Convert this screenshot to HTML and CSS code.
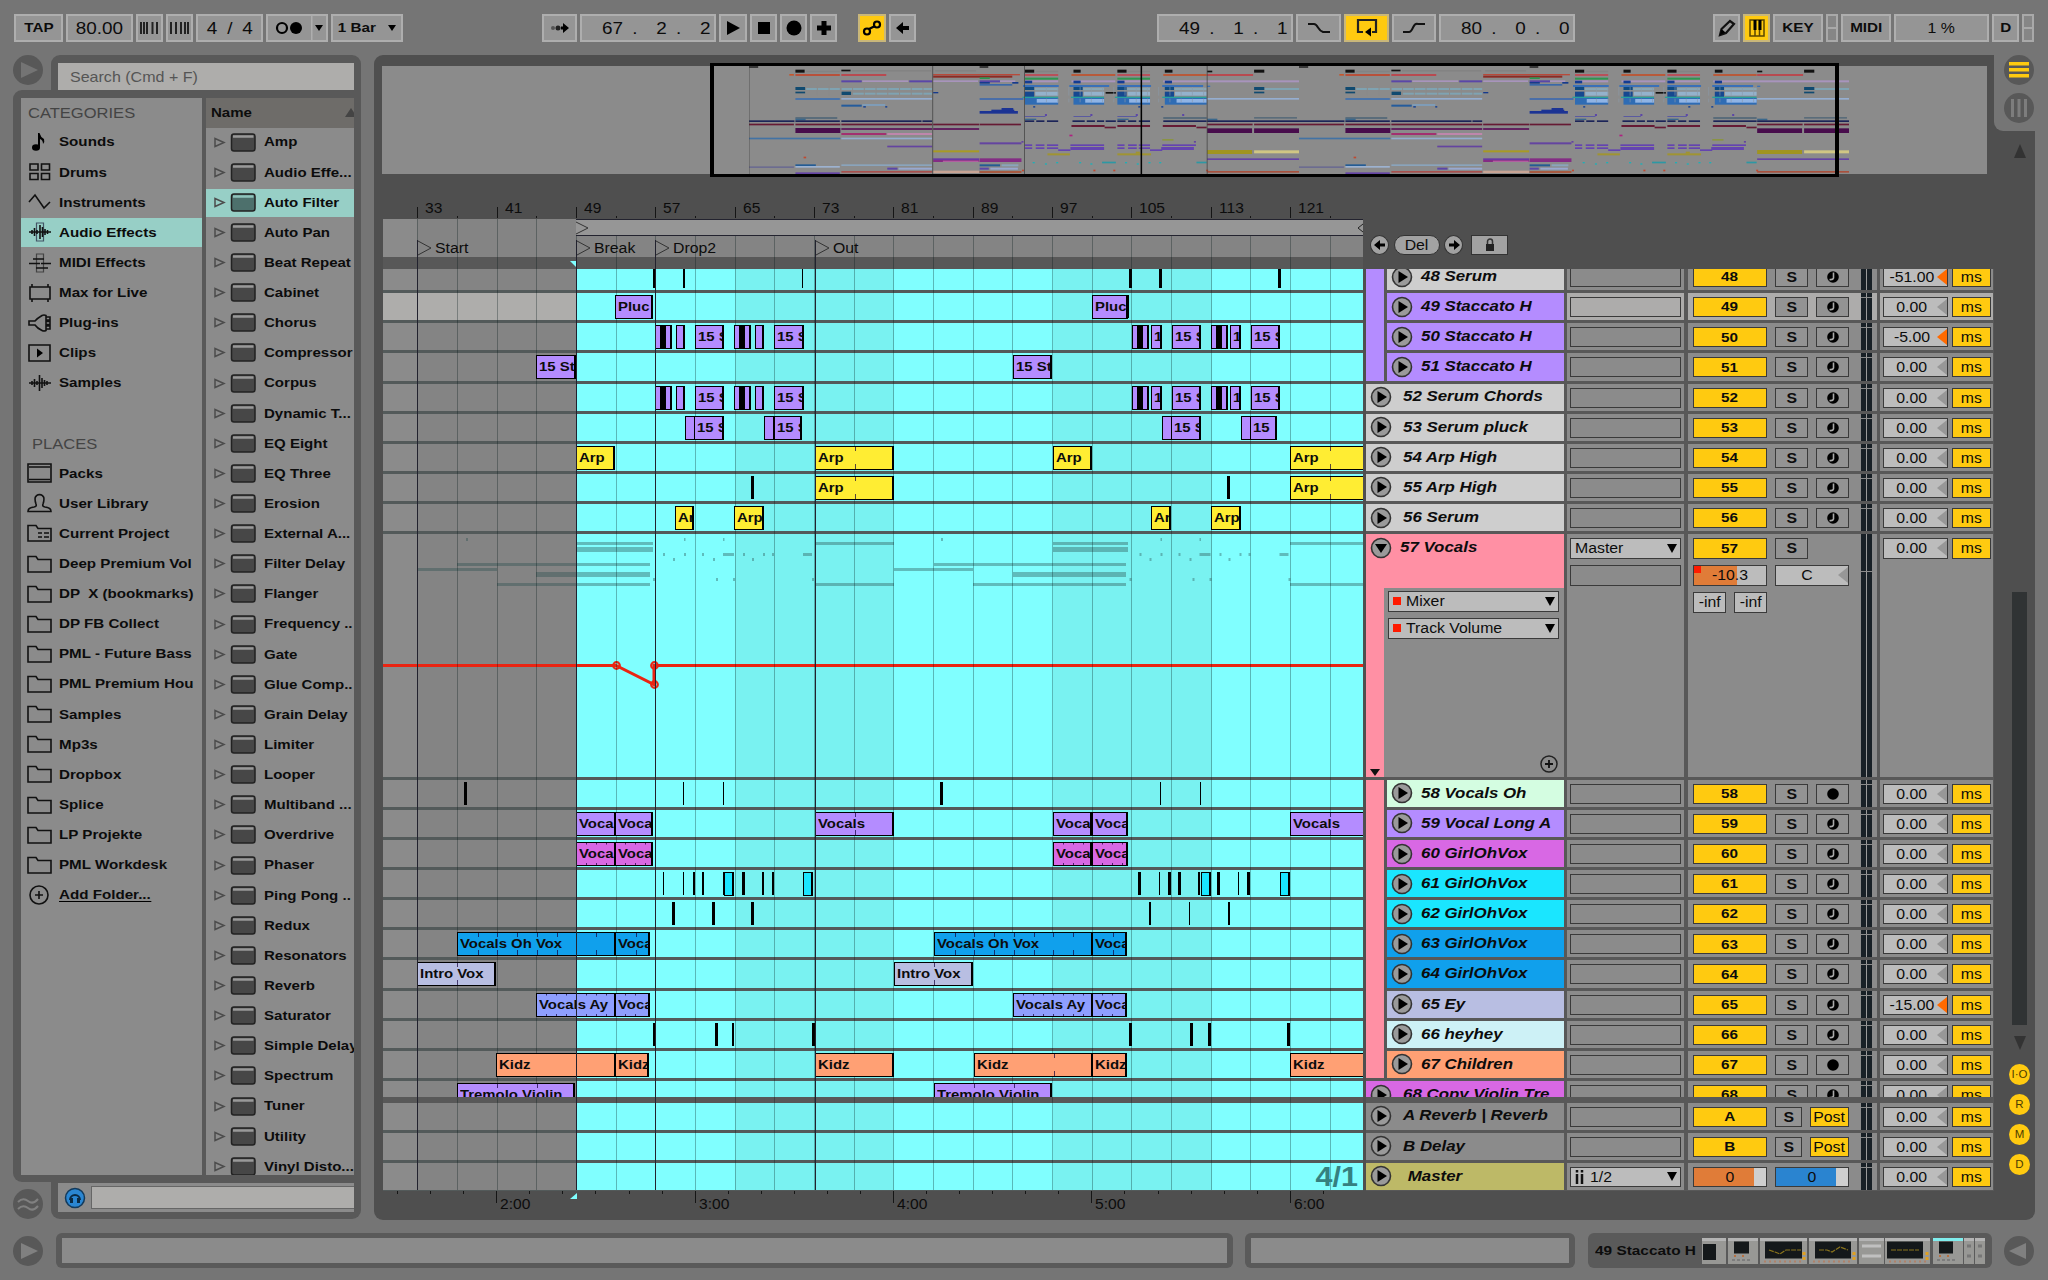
FILE: index.html
```html
<!DOCTYPE html>
<html lang="en">
<head>
    <meta charset="UTF-8">
    <meta name="viewport" content="width=device-width, initial-scale=1.0">
    <title>Arrangement</title>
    <link rel="stylesheet" href="styles.css">
</head>
<body>
    <header class="topbar">
        <div class="group">
            <div class="btn w49 bold"><span>TAP</span></div>
            <div class="btn w67 big"><span>80.00</span></div>
            <div class="btn w27"><svg width="21" height="14"><path d="M2 1v12M5 1v12M8 1v12M13.500 1v12M18 1v12" stroke="#222" stroke-width="2"/></svg></div>
            <div class="btn w27"><svg width="21" height="14"><path d="M2 1v12M7 1v12M12 1v12M16 1v12M19 1v12" stroke="#222" stroke-width="2"/></svg></div>
            <div class="btn w67 big"><span class="sig">4 / 4</span></div>
            <div class="btn w62 metro">
                <svg width="30" height="14"><ellipse cx="8" cy="7" rx="5" ry="5" fill="none" stroke="#000" stroke-width="2.200"/><circle cx="22" cy="7" r="6"/></svg>
                <i class="down"></i>
            </div>
            <div class="btn w72 bold"><span>1 Bar</span><i class="down"></i></div>
        </div>
        <div class="group transport">
            <div class="btn w35"><svg width="22" height="12"><circle cx="4" cy="6" r="2" fill="#555"/><circle cx="9" cy="6" r="2.500" fill="#222"/><path d="M12 4.500h2v-3.500l6 5-6 5v-3.500h-2z"/></svg></div>
            <div class="btn w136 big right"><span>67 .&nbsp; 2 .&nbsp; 2</span></div>
            <div class="btn w28"><svg width="16" height="16"><path d="M2 1l13 7-13 7z"/></svg></div>
            <div class="btn w27"><svg width="14" height="14"><path d="M1 1h12v12H1z"/></svg></div>
            <div class="btn w27"><svg width="16" height="16"><circle cx="8" cy="8" r="7.500"/></svg></div>
            <div class="btn w27"><svg width="16" height="16"><path d="M5.500 1h5v4.500H15v5h-4.500V15h-5v-4.500H1v-5h4.500z"/></svg></div>
            <div class="btn w28 on gap"><svg width="20" height="16" fill="none" stroke="#000" stroke-width="2.200"><circle cx="5" cy="11.500" r="3"/><circle cx="15" cy="4.500" r="3"/><path d="M7 9l6-3"/></svg></div>
            <div class="btn w27"><svg width="16" height="14"><path d="M1 7l7-6v4h6v4H8v4z"/></svg></div>
        </div>
        <div class="group loop">
            <div class="btn w136 big right"><span>49 .&nbsp; 1 .&nbsp; 1</span></div>
            <div class="btn w45"><svg width="24" height="12"><path d="M1 2h6q2 0 4 3.500T16 10h7" fill="none" stroke="#111" stroke-width="2"/></svg></div>
            <div class="btn w45 on"><svg width="22" height="20"><path d="M7 14H2V2h18v12h-4" fill="none" stroke="#222" stroke-width="2.200"/><path d="M9 14l6-4.500v9z"/></svg></div>
            <div class="btn w44"><svg width="24" height="12"><path d="M1 10h6q2 0 4-4.500T16 2h7" fill="none" stroke="#111" stroke-width="2"/></svg></div>
            <div class="btn w136 big right"><span>80 .&nbsp; 0 .&nbsp; 0</span></div>
        </div>
        <div class="group status">
            <div class="btn w27"><svg width="18" height="18"><path d="M2 16l1.500-6L12 2l4 3-8 9z" fill="none" stroke="#111" stroke-width="2.200"/><path d="M3.500 10l4 3.500L2 16z"/></svg></div>
            <div class="btn w27 on"><svg width="18" height="18"><path d="M2 1h14v16H2zM7 1v16M11.500 1v16" fill="none" stroke="#5a4600" stroke-width="1.500"/><path d="M5.500 1h3v10h-3zM10.500 1h3v10h-3z"/></svg></div>
            <div class="btn w50 bold"><span>KEY</span></div>
            <div class="lamps"><i></i><i></i></div>
            <div class="btn w50 bold"><span>MIDI</span></div>
            <div class="btn w95"><span>1 %</span></div>
            <div class="btn w27 bold"><span>D</span></div>
            <div class="lamps"><i></i><i></i></div>
        </div>
    </header>

    <div class="middle">
        <aside class="browser">
            <div class="browser-top">
                <div class="side"><div class="knob"><svg width="30" height="30"><path d="M8 7l17 8-17 8z" fill="#747474"/></svg></div></div>
                <div class="search-frame"><div class="search"><span>Search (Cmd + F)</span></div></div>
            </div>
            <div class="browser-main">
                <div class="sources">
                    <h3><span>CATEGORIES</span></h3>
                    <div id="categories"></div>
                    <h3 class="places"><span>PLACES</span></h3>
                    <div id="places"></div>
                </div>
                <div class="content">
                    <div class="content-head"><span>Name</span><i></i></div>
                    <div id="devices"></div>
                </div>
            </div>
            <div class="browser-bottom">
                <div class="side low"><div class="knob"><svg width="30" height="30" fill="none" stroke="#808080" stroke-width="2"><path d="M5 13q5-5 10-1t10-2M5 20q5-5 10-1t10-2"/></svg></div></div>
                <div class="preview-frame">
                    <div class="preview">
                        <svg width="22" height="22"><circle cx="11" cy="11" r="9.500" fill="#2a86d2" stroke="#123a5c" stroke-width="1.500"/><path d="M6 13a5 5 0 1 1 10 0" fill="none" stroke="#0a2a44" stroke-width="2"/><path d="M6 11h3v5H6zM13 11h3v5h-3z" fill="#0a2a44"/></svg>
                        <div class="preview-bar"></div>
                    </div>
                </div>
            </div>
        </aside>

        <main class="main">
            <div class="notch">
                <div class="knob"><svg width="30" height="30"><path d="M5 7h20v3.500H5zM5 13h20v3.500H5zM5 19h20v3.500H5z" fill="#ffca10"/></svg></div>
                <div class="knob"><svg width="30" height="30"><path d="M8.500 6v18M15 6v18M21.500 6v18" stroke="#7d7d7d" stroke-width="3"/></svg></div>
            </div>
            <div class="overview">
                <svg id="overview" width="1100" height="108" viewBox="0 0 2156 324" preserveAspectRatio="none"></svg>
                <div class="window"></div>
            </div>
            <div class="arrangement">
                <section class="timeline">
                    <div class="ruler" id="ruler"></div>
                    <div class="scrub">
                        <div class="brace"><svg width="14" height="14"><path d="M0 1l12 6-12 6" fill="none" stroke="#333"/></svg><svg width="6" height="10"><path d="M6 1L1 5l5 4" fill="none" stroke="#222"/></svg></div>
                    </div>
                    <div class="strip"></div>
                    <div class="lanes" id="lanes"></div>
                    <div class="divider"></div>
                    <div class="returns" id="returnLanes"></div>
                    <div class="times" id="times"></div>
                    <div class="gridlines" id="gridlines"></div>
                    <div id="locators"></div>
                    <svg class="flag top" width="6" height="6"><path d="M0 0h6v6z" fill="#80ffff"/></svg>
                    <svg class="flag bottom" width="7" height="6"><path d="M0 6h7V0z" fill="#80ffff"/></svg>
                    <div class="zoomlevel"><span>4/1</span></div>
                </section>
                <section class="mixer">
                    <div class="locator-tools">
                        <div class="round"><svg width="12" height="12"><path d="M0 6l6-5v3.500h5v3H6V11z"/></svg></div>
                        <div class="pill"><span>Del</span></div>
                        <div class="round"><svg width="12" height="12"><path d="M12 6L6 1v3.500H1v3h5V11z"/></svg></div>
                        <div class="lock"><svg width="10" height="14"><path d="M2.500 6V3.500a2.500 2.500 0 0 1 5 0V6" fill="none" stroke="#333" stroke-width="1.500"/><path d="M1 6h8v7H1z" fill="#222"/></svg></div>
                    </div>
                    <div class="tracks" id="tracks"></div>
                    <div class="divider"></div>
                    <div class="returns" id="returns"></div>
                </section>
                <section class="scroll">
                    <i class="up"></i>
                    <div class="bar"></div>
                    <i class="dn"></i>
                    <div class="dot">I·O</div>
                    <div class="dot">R</div>
                    <div class="dot">M</div>
                    <div class="dot">D</div>
                </section>
            </div>
        </main>
    </div>

    <footer class="footer">
        <div class="knob"><svg width="30" height="30"><path d="M8 7l17 8-17 8z" fill="#808080"/></svg></div>
        <div class="info wide"><div></div></div>
        <div class="info short"><div></div></div>
        <div class="chain">
            <span>49 Staccato H</span>
            <svg width="284" height="26" id="chain"></svg>
        </div>
        <div class="knob"><svg width="30" height="30"><path d="M22 7L5 15l17 8z" fill="#808080"/></svg></div>
    </footer>

    <script src="script.js"></script>
</body>
</html>
```

FILE: styles.css
```css
* {
    box-sizing: border-box;
}
body {
    margin: 0;
    width: 2048px;
    height: 1280px;
    overflow: hidden;
    background-color: #757575;
    font-family: "Liberation Sans", Arial, sans-serif;
    font-size: 14px;
    color: #0c0c0c;
    line-height: 1;
}
svg {
    display: block;
    flex: none;
}
/* the interface font is a little wide */
span {
    display: inline-block;
    white-space: pre;
    transform: scaleX(1.13);
    transform-origin: center;
}
.knob {
    width: 30px;
    height: 30px;
    border-radius: 50%;
    background-color: #585858;
    flex: none;
}

/* top bar */
.topbar {
    display: flex;
    height: 55px;
    padding: 14px 0 0 14px;
}
.group {
    display: flex;
    gap: 3px;
    height: 28px;
}
.transport {
    margin-left: 139px;
}
.loop {
    margin-left: 241px;
}
.status {
    margin-left: 138px;
}
.btn {
    display: flex;
    align-items: center;
    justify-content: center;
    border: 2px solid #aeaeae;
    background-color: #959595;
    white-space: nowrap;
}
.btn.on {
    background-color: #ffca10;
    border-color: #c9b77a;
}
.btn.gap {
    margin-left: 18px;
}
.btn.bold {
    font-weight: bold;
    font-size: 13.500px;
}
.btn.big {
    font-size: 16.300px;
}
.btn.big span {
    transform: scaleX(1.16);
}
.btn.right {
    justify-content: flex-end;
    padding-right: 4px;
}
.btn.right span {
    transform-origin: right;
    word-spacing: 3.500px;
}
.sig {
    word-spacing: 4px;
}
.down {
    border: 4px solid transparent;
    border-top: 6px solid #000;
    border-bottom: 0;
}
.metro {
    justify-content: space-between;
    padding: 0 3px 0 6px;
    background-image: linear-gradient(#aeaeae, #aeaeae);
    background-size: 1.500px 100%;
    background-position: 43px 0;
    background-repeat: no-repeat;
}
.w72 {
    width: 72px;
    justify-content: space-between;
    padding: 0 5px 0 7px;
}
.w27 { width: 27px; }
.w28 { width: 28px; }
.w35 { width: 35px; }
.w44 { width: 44px; }
.w45 { width: 45px; }
.w49 { width: 49px; }
.w50 { width: 50px; }
.w62 { width: 62px; }
.w67 { width: 67px; }
.w95 { width: 95px; }
.w136 { width: 136px; }
.lamps {
    display: flex;
    flex-direction: column;
    width: 12px;
}
.lamps i {
    flex: 1;
    border: 2px solid #a9a9a9;
    background-color: #868686;
}
.lamps i + i {
    border-top: 0;
}

.middle {
    display: flex;
    gap: 13px;
    height: 1165px;
    padding-left: 13px;
}

/* browser */
.browser {
    width: 348px;
    display: flex;
    flex-direction: column;
}
.browser-top,
.browser-bottom {
    display: flex;
}
.side {
    width: 38px;
}
.side.low {
    padding-top: 7px;
}
.search-frame {
    flex: 1;
    height: 35px;
    padding: 8px 7px 0;
    background-color: #595959;
    border-radius: 9px 9px 0 0;
}
.search {
    height: 27px;
    padding: 7px 0 0 12px;
    background-color: #aeadab;
    color: #555;
    font-size: 14.200px;
}
.search span,
.sources span,
.content span,
.name span,
.clip span {
    transform-origin: left;
}
.browser-main {
    display: flex;
    gap: 4px;
    height: 1092px;
    padding: 8px 7px 7px 8px;
    background-color: #595959;
    border-radius: 9px 0 0 9px;
}
.sources {
    width: 181px;
    background-color: #8b8b8b;
    overflow: hidden;
}
.sources h3 {
    margin: 0;
    height: 29px;
    padding: 8px 0 0 7px;
    font-size: 14.500px;
    font-weight: normal;
    color: #444;
}
.sources h3.places {
    height: 31px;
    margin-top: 29px;
    padding: 10px 0 0 11px;
}
.sources h3 span,
.sources .item span {
    transform: scaleX(1.14);
}
.item,
.device {
    display: flex;
    align-items: center;
    height: 30.130px;
    font-weight: bold;
    font-size: 13.300px;
}
.item svg {
    margin: 0 7px 0 6px;
}
.item.active,
.device.active {
    background-color: #97cfc6;
    background-clip: content-box;
    padding: 1px 0;
}
.underline {
    border-bottom: 1.500px solid #000;
}
.content {
    flex: 1;
    background-color: #8b8b8b;
    overflow: hidden;
}
.content-head {
    display: flex;
    align-items: center;
    justify-content: space-between;
    height: 29.500px;
    padding-left: 5px;
    font-weight: bold;
    font-size: 13.300px;
    background-color: #6e6c69;
}
.content-head i {
    border: 6px solid transparent;
    border-bottom: 9px solid #444;
    border-top: 0;
    margin-right: -3px;
}
.device svg {
    margin-left: 8px;
    margin-right: 7.500px;
}
.device span {
    margin-top: -1px;
}
.browser-bottom {
    height: 37px;
}
.preview-frame {
    flex: 1;
    padding: 1px 7px 7px;
    background-color: #595959;
    border-radius: 0 0 9px 9px;
}
.preview {
    display: flex;
    align-items: center;
    height: 29px;
    padding-left: 6px;
    background-color: #8b8b8b;
}
.preview-bar {
    flex: 1;
    height: 23px;
    margin-left: 5px;
    background-color: #aeadab;
    border: 1px solid #666;
    border-right: 0;
}

/* main panel */
.main {
    position: relative;
    width: 1661px;
    padding: 11px 0 0 8px;
    background-color: #4f4f4f;
    border-radius: 9px;
}
.notch {
    position: absolute;
    right: 0;
    top: 0;
    width: 41px;
    height: 76px;
    display: flex;
    flex-direction: column;
    gap: 8px;
    padding-left: 10px;
    background-color: #757575;
    border-bottom-left-radius: 9px;
}
.overview {
    position: relative;
    width: 1605px;
    height: 108px;
    padding-left: 367px;
    background-color: #8b8b8b;
}
.window {
    position: absolute;
    left: 328px;
    top: -3px;
    width: 1129px;
    height: 114px;
    border: 3px solid #000;
    border-left-width: 4px;
    border-right-width: 4px;
}
.arrangement {
    display: flex;
}
.timeline {
    position: relative;
    width: 980px;
    margin-left: 1px;
}
.ruler {
    position: relative;
    height: 45px;
}
.ruler div,
.times div {
    position: absolute;
    width: 1px;
    background-color: #151515;
}
.ruler .bar {
    top: 33px;
    height: 11px;
}
.ruler .half {
    top: 42px;
    height: 2px;
}
.ruler span,
.times span {
    position: absolute;
    left: 8px;
    top: -5px;
    transform-origin: left;
    font-size: 13.800px;
}
.scrub {
    height: 38px;
    background: linear-gradient(90deg, #8b8b8b 34px, #848484 34px);
}
.brace {
    display: flex;
    align-items: center;
    justify-content: space-between;
    height: 17px;
    margin-left: 193px;
    background-color: #969696;
    border-top: 1.500px solid #23232f;
    border-bottom: 1.500px solid #23232f;
}
.strip {
    height: 12px;
    background-color: #585858;
}
.lanes,
.tracks {
    height: 828px;
    overflow: hidden;
}
.divider {
    height: 5.500px;
    background-color: #585858;
}
.lane {
    position: relative;
    height: 30.140px;
    border-bottom: 3px solid #535a5a;
    overflow: hidden;
    background: linear-gradient(90deg, #8b8b8b 34.500px, #848484 34.500px, #848484 193px, #80ffff 193px, #80ffff 351.500px, #79f2f1 351.500px, #79f2f1 511px, #80ffff 511px, #80ffff 670px, #79f2f1 670px, #79f2f1 828.500px, #80ffff 828.500px);
}
.lane.selected {
    background: linear-gradient(90deg, #aeadab 193px, #80ffff 193px, #80ffff 351.500px, #79f2f1 351.500px, #79f2f1 511px, #80ffff 511px, #80ffff 670px, #79f2f1 670px, #79f2f1 828.500px, #80ffff 828.500px);
}
.lanes .lane:first-child,
.tracks .track:first-child {
    margin-top: -6px;
}
.lane.tall {
    height: 245.600px;
}
.returns {
    height: 88px;
    overflow: hidden;
}
.clip {
    position: absolute;
    top: 2px;
    height: 24px;
    padding: 4px 0 0 2px;
    border: 1px solid #000;
    border-right-width: 2px;
    font-weight: bold;
    font-size: 13.200px;
    overflow: hidden;
    z-index: 1;
}
.clip i {
    position: absolute;
    top: 0;
    bottom: 0;
    width: 1px;
    background: linear-gradient(rgba(20, 0, 60, 0.7) 4px, transparent 4px, transparent 17px, rgba(20, 0, 60, 0.7) 17px);
}
.clip.dotted i {
    background: linear-gradient(rgba(20, 0, 60, 0.7) 1px, transparent 2px, transparent 20px, rgba(20, 0, 60, 0.7) 20px);
}
.tick {
    position: absolute;
    top: 2px;
    height: 23px;
    background-color: #000;
}
.stripe {
    background-image: linear-gradient(#000, #000);
    background-size: 6px 100%;
    background-position: 4px 0;
    background-repeat: no-repeat;
}
.purple { background-color: #b48cff; }
.yellow { background-color: #ffed33; }
.magenta { background-color: #d868e4; }
.cyan { background-color: #1ae6ff; }
.blue { background-color: #10a0ec; }
.lavender { background-color: #b8bee2; }
.peri { background-color: #8f9fff; }
.orange { background-color: #ffa074; }
.grey { background-color: #cecece; }
.mint { background-color: #d4fde1; }
.ice { background-color: #cdf1f6; }
.pink { background-color: #ff90a4; }
.plain { background-color: #8b8b8b; }
.olive { background-color: #bdb967; }

.gridlines div {
    position: absolute;
    top: 45px;
    width: 1px;
    height: 971px;
    background-color: rgba(0, 20, 20, 0.3);
}
.gridlines .under {
    top: 62px;
    height: 954px;
}
.locator {
    position: absolute;
    top: 66px;
    height: 950px;
    border-left: 1.500px solid #22222e;
    z-index: 2;
}
.locator svg {
    position: absolute;
    left: 0;
    top: 0;
}
.locator span {
    position: absolute;
    left: 17px;
    top: 1px;
    transform-origin: left;
}
.flag {
    position: absolute;
}
.flag.top {
    left: 187px;
    top: 87px;
}
.flag.bottom {
    left: 187px;
    top: 1019px;
}
.zoomlevel {
    position: absolute;
    right: 7px;
    top: 990px;
    font-size: 27px;
    font-weight: bold;
    color: #35807f;
}
.times {
    position: relative;
    height: 29px;
}
.times .minute {
    top: 0;
    height: 12px;
}
.times .half {
    top: 0;
    height: 3px;
}
.times span {
    left: 4px;
    top: 7px;
}

/* track headers */
.mixer {
    width: 628px;
    margin-left: 3px;
}
.locator-tools {
    display: flex;
    align-items: center;
    height: 95px;
    padding: 46px 0 0 4px;
}
.round,
.pill,
.lock {
    display: flex;
    align-items: center;
    justify-content: center;
    height: 20px;
    background-color: #a2a2a2;
    border: 1.500px solid #333;
}
.round {
    width: 19px;
    border-radius: 50%;
}
.pill {
    width: 46px;
    margin: 0 4.500px;
    border-radius: 10px;
}
.lock {
    width: 37px;
    margin-left: 8px;
}
.track {
    display: flex;
    height: 30.140px;
    border-bottom: 3px solid #585858;
    background-color: #585858;
}
.track.tall {
    height: 245.600px;
}
.name-col {
    display: flex;
    width: 198px;
    margin-right: 3px;
}
.group-strip {
    flex: none;
    width: 17.500px;
    height: calc(100% + 3px);
    margin-right: 3.500px;
}
.group-strip.last {
    height: 100%;
}
.name {
    flex: 1;
    display: flex;
    align-items: center;
    padding-left: 4px;
    font-weight: bold;
    font-style: italic;
    font-size: 14.200px;
}
.name span {
    transform: scaleX(1.19);
    margin-left: 11px;
    margin-top: -1px;
}
.child .name span {
    margin-left: 7.500px;
}
.io {
    width: 117px;
    margin-right: 4px;
    padding: 4px 3px 0;
    background-color: #8b8b8b;
}
.controls {
    position: relative;
    width: 189px;
    margin-right: 3px;
    padding: 4px 0 0 5px;
    background-color: #8b8b8b;
}
.delay {
    display: flex;
    gap: 4px;
    width: 113px;
    padding: 4px 0 0 3px;
    background-color: #8b8b8b;
}
.selected .io,
.selected .controls,
.selected .delay {
    background-color: #adacab;
}
.box {
    display: flex;
    align-items: center;
    justify-content: center;
    height: 20px;
    border: 1.500px solid #3a3a3a;
    flex: none;
}
.io .box {
    width: 111px;
}
.line {
    display: flex;
    gap: 8px;
    margin-bottom: 7px;
}
.num {
    width: 74px;
    font-weight: bold;
    font-size: 13.500px;
    background-color: #ffca10;
}
.solo,
.arm {
    width: 33px;
    background-color: #939393;
    font-weight: bold;
}
.solo.small {
    width: 27px;
}
.post {
    width: 39px;
    background-color: #ffca10;
}
.value {
    position: relative;
    width: 65px;
    padding-right: 8px;
    background-color: #bcbcbc;
}
.value::after,
.pan::after {
    content: "";
    position: absolute;
    right: 0;
    border: 8px solid transparent;
    border-right: 10px solid #979797;
    border-left: 0;
}
.value.set::after {
    border-right-color: #ff6a00;
}
.ms {
    width: 39px;
    background-color: #ffca10;
}
.meters {
    position: absolute;
    left: 173px;
    top: 0;
    bottom: 0;
    width: 11px;
    border: solid #182026;
    border-width: 0 5px;
    background-color: #9a9a9a;
}
.meters::after {
    content: "";
    position: absolute;
    left: -5px;
    width: 11px;
    top: 4px;
    height: 1px;
    background-color: #8b8b8b;
}
.tall .meters::after {
    top: 37px;
}
.select {
    position: relative;
    justify-content: flex-start;
    padding-left: 4px;
    background-color: #bcbcbc;
}
.select span {
    transform-origin: left;
}
.select svg {
    margin-right: 6px;
}
.select::after {
    content: "";
    position: absolute;
    right: 3px;
    border: 5.500px solid transparent;
    border-top: 9px solid #000;
    border-bottom: 0;
}
.select i {
    width: 8px;
    height: 8px;
    margin-right: 5px;
    background-color: #ff1a00;
}
.tall .box {
    height: 20.500px;
}
.tall .io .box {
    margin-bottom: 6.500px;
}
.tall .line {
    margin-bottom: 6.500px;
}
.tall .name {
    flex: none;
    height: 54px;
    padding-bottom: 27px;
}
.tall .name span {
    margin-left: 8px;
}
.tall .name-col {
    flex-direction: column;
    background: linear-gradient(90deg, #ff90a4 17.500px, #8b8b8b 17.500px);
}
.chooser {
    position: relative;
    height: 189px;
    padding: 3px 5px 0 22px;
}
.chooser .box {
    width: 171px;
    margin-bottom: 6.500px;
}
.chooser .add {
    position: absolute;
    right: 6px;
    bottom: 4px;
}
.chooser .fold {
    position: absolute;
    left: 4px;
    bottom: 1px;
    border: 5.500px solid transparent;
    border-top: 7px solid #111;
    border-bottom: 0;
}
.volume {
    position: relative;
    width: 74px;
    background: linear-gradient(90deg, #e07c38 60%, #bcbcbc 60%);
}
.volume i {
    position: absolute;
    left: 0;
    top: 0;
    width: 7px;
    height: 7px;
    background-color: #ff1a00;
}
.pan {
    position: relative;
    width: 74px;
    padding-right: 10px;
    background-color: #bcbcbc;
}
.inf {
    width: 33px;
    background-color: #bcbcbc;
}
.master-vol {
    width: 74px;
    background: linear-gradient(90deg, #e07c38 83%, #cfcfcf 83%);
}
.master-cue {
    width: 74px;
    background: linear-gradient(90deg, #2a84d0 83%, #cfcfcf 83%);
}

.scroll {
    display: flex;
    flex-direction: column;
    align-items: center;
    margin-left: 10px;
    width: 31px;
}
.scroll .up {
    margin-top: -30px;
    border: 6.500px solid transparent;
    border-bottom: 14px solid #333;
    border-top: 0;
}
.scroll .bar {
    width: 14.500px;
    height: 433px;
    margin-top: 434px;
    background-color: #303334;
}
.scroll .dn {
    margin: 11px 0 13.500px;
    border: 6.500px solid transparent;
    border-top: 14px solid #333;
    border-bottom: 0;
}
.dot {
    width: 21px;
    height: 21px;
    margin-bottom: 9.100px;
    border-radius: 50%;
    background-color: #ffca10;
    color: #4c3c00;
    font-size: 11.500px;
    line-height: 21px;
    text-align: center;
}

/* footer */
.footer {
    display: flex;
    align-items: center;
    height: 60px;
    padding: 1px 0 0 13px;
}
.info,
.chain {
    height: 35px;
    background-color: #5a5a5a;
    border-radius: 6px;
    padding: 5px 6px;
}
.info div {
    height: 25px;
    background-color: #8b8b8b;
}
.wide {
    width: 1177px;
    margin-left: 13px;
}
.short {
    width: 330px;
    margin-left: 12px;
}
.chain {
    display: flex;
    align-items: center;
    justify-content: space-between;
    width: 404px;
    margin: 0 12px 0 13px;
    font-weight: bold;
    font-size: 13.500px;
}
.chain span {
    transform: scaleX(1.14);
    transform-origin: left;
    margin-left: 1px;
}
```

FILE: script.js
```js
const BAR4 = 39.67;

/* ---------- browser ---------- */
const stroke = 'fill="none" stroke="#111" stroke-width="1.6"';
const icons = {
    note: '<ellipse cx="9" cy="15.5" rx="4" ry="3.2"/><path d="M11 16V1h1.500q1 4 4.500 6 1 3-1 5 0-4-3-5v9z" />',
    drums: `<path d="M3 2h8v6H3zM14.500 2h8v6h-8zM3 11.500h8v6H3zM14.500 11.500h8v6h-8z" ${stroke}/>`,
    zigzag: `<path d="M2 10L8 3l9 13 6-6" ${stroke}/>`,
    wave: `<path d="M2 10h22M5 8v4M7.500 6v8M10 8v4M12.500 2v16M15 5v10M17.500 7v6M20 8v4" ${stroke}/>`,
    audio: `<path d="M9.500 1h7v18h-7z" fill="none" stroke="#456" stroke-width="1.2"/><path d="M2 10h22M5 8v4M7.500 6v8M10 8v4M13 3v14M15.500 5v10M18 7v6M20.500 8v4" ${stroke}/>`,
    midi: `<path d="M9.500 1h7v18h-7z" fill="none" stroke="#444" stroke-width="1.2"/><path d="M6 6h11M2 10.500h11M14 10.500h10M9 15h12" ${stroke}/>`,
    max: `<path d="M3 4h20v12H3zM5 4V1M21 4V1M5 16v3M21 16v3" ${stroke}/>`,
    plug: `<path d="M19 2.500q-2-1-4 0-5 3-7 5.500H2v4h6q2 3 7 5.500 2 1 4 0zM19 4h4v3h-4M19 8.500h4v3h-4M19 13h4v3h-4" ${stroke}/>`,
    clips: `<path d="M2 2h21v16H2z" ${stroke}/><path d="M10 5.500l6 4.500-6 4.500z"/>`,
    packs: `<path d="M1 1h23v18H1zM2 4h21M2 16.500h21" ${stroke}/>`,
    user: `<path d="M1 18.500q0-4 6-4.500 3-.5 2-3-3-9 3.500-9.500 6.500.5 3.500 9.500-1 2.500 2 3 6 .5 6 4.500z" ${stroke}/>`,
    project: `<path d="M1 18V2.500h8l2 3h13V18zM11 10h4M17 10h5M11 14h4M17 14h5" ${stroke}/>`,
    folder: `<path d="M1 18V2.500h8l2 3h13V18z" ${stroke}/>`,
    add: `<circle cx="12" cy="10" r="9" ${stroke}/><path d="M8 10h8M12 6v8" ${stroke}/>`
};
const categories = [['note', 'Sounds'], ['drums', 'Drums'], ['zigzag', 'Instruments'], ['audio', 'Audio Effects'], ['midi', 'MIDI Effects'], ['max', 'Max for Live'], ['plug', 'Plug-ins'], ['clips', 'Clips'], ['wave', 'Samples']];
const places = [['packs', 'Packs'], ['user', 'User Library'], ['project', 'Current Project'], ['folder', 'Deep Premium Vol'], ['folder', 'DP  X (bookmarks)'], ['folder', 'DP FB Collect'], ['folder', 'PML - Future Bass'], ['folder', 'PML Premium Hou'], ['folder', 'Samples'], ['folder', 'Mp3s'], ['folder', 'Dropbox'], ['folder', 'Splice'], ['folder', 'LP Projekte'], ['folder', 'PML Workdesk'], ['add', 'Add Folder...']];
const devices = ['Amp', 'Audio Effe...', 'Auto Filter', 'Auto Pan', 'Beat Repeat', 'Cabinet', 'Chorus', 'Compressor', 'Corpus', 'Dynamic T...', 'EQ Eight', 'EQ Three', 'Erosion', 'External A...', 'Filter Delay', 'Flanger', 'Frequency ..', 'Gate', 'Glue Comp..', 'Grain Delay', 'Limiter', 'Looper', 'Multiband ...', 'Overdrive', 'Phaser', 'Ping Pong ..', 'Redux', 'Resonators', 'Reverb', 'Saturator', 'Simple Delay', 'Spectrum', 'Tuner', 'Utility', 'Vinyl Disto...'];

function itemHtml([icon, label]) {
    const active = label === 'Audio Effects' ? ' active' : '';
    const line = icon === 'add' ? ' class="underline"' : '';
    return `<div class="item${active}"><svg width="25" height="20">${icons[icon]}</svg><span${line}>${label}</span></div>`;
}
document.getElementById('categories').innerHTML = categories.map(itemHtml).join('');
document.getElementById('places').innerHTML = places.map(itemHtml).join('');
document.getElementById('devices').innerHTML = devices.map(name => {
    const on = name === 'Auto Filter';
    const fill = on ? '#4d706c' : '#474747';
    return `<div class="device${on ? ' active' : ''}"><svg width="42" height="20">
        <path d="M1 5.500l9 4-9 4z" fill="none" stroke="#4c4c4c" stroke-width="1.500"/>
        <rect x="17.500" y="1" width="23.500" height="17" rx="2.500" fill="${fill}" stroke="#222" stroke-width="1.500"/>
        <path d="M19 3.500h20.500" stroke="${on ? '#8fc4bc' : '#999'}" stroke-width="2.500"/></svg><span>${name}</span></div>`;
}).join('');

/* ---------- overview: x, y, w, h, colour; the song repeats once ---------- */
const notes = [
    [0, 1, 18, 4, '#111'], [91, 11, 18, 9, '#111'], [181, 11, 18, 5, '#111'], [452, 1, 17, 4, '#111'], [541, 11, 18, 9, '#111'], [636, 11, 14, 9, '#111'], [722, 11, 18, 9, '#111'], [815, 11, 15, 9, '#111'], [898, 14, 10, 5, '#111'], [990, 11, 20, 9, '#111'],
    [112, 14, 66, 5, '#838383'], [202, 12, 155, 5, '#838383'], [365, 12, 80, 5, '#838383'], [562, 14, 44, 5, '#838383'], [742, 14, 44, 5, '#838383'],
    [79, 24, 9, 5, '#c4572f'], [91, 24, 87, 6, '#b8503a'], [181, 24, 88, 6, '#b84a50'], [361, 24, 170, 4, '#b84a3a'], [361, 29, 155, 6, '#8b2a24'], [541, 24, 65, 6, '#b8505a'], [632, 24, 86, 6, '#b85a3a'], [722, 24, 64, 6, '#b8505a'], [812, 24, 85, 6, '#b85a3a'], [898, 24, 90, 6, '#b84a50'],
    [541, 35, 65, 6, '#2d9650'], [722, 35, 64, 6, '#2d9650'], [452, 34, 20, 5, '#2d9650'],
    [181, 43, 40, 6, '#5a46a8'], [222, 43, 90, 5, '#a894bc'], [314, 43, 45, 6, '#5a46a8'], [361, 43, 88, 5, '#a894bc'], [452, 43, 40, 6, '#5a46a8'], [492, 43, 30, 5, '#a894bc'], [541, 43, 65, 6, '#a894bc'], [632, 43, 86, 6, '#a894bc'], [722, 43, 64, 6, '#a894bc'], [812, 43, 266, 6, '#a894bc'],
    [452, 48, 20, 5, '#163a8c'], [516, 48, 12, 5, '#163a8c'], [452, 54, 64, 5, '#3a68a8'], [537, 57, 70, 6, '#3a70b8'], [628, 57, 78, 6, '#3a70b8'], [722, 57, 66, 6, '#3a70b8'], [810, 57, 80, 6, '#3a70b8'], [898, 59, 6, 4, '#3a70b8'],
    [91, 63, 19, 9, '#104a70'], [112, 66, 66, 6, '#7fa3b2'], [181, 66, 178, 6, '#7fa3b2'], [990, 63, 20, 9, '#104a70'], [1011, 66, 67, 6, '#7fa3b2'],
    [91, 77, 19, 5, '#104a70'], [181, 77, 19, 10, '#104a70'], [202, 80, 157, 6, '#7fa3b2'], [361, 78, 10, 4, '#163a8c'], [699, 78, 20, 5, '#111'], [990, 77, 20, 5, '#104a70'],
    [91, 96, 87, 6, '#4a74aa'], [181, 96, 178, 5, '#95aed0'], [452, 96, 86, 6, '#4a6ea8'], [898, 96, 180, 5, '#95aed0'],
    [181, 116, 40, 6, '#255c9c'], [222, 115, 45, 4, '#7aa4cc'], [224, 120, 5, 5, '#224a94'], [267, 120, 4, 5, '#224a94'], [557, 120, 4, 5, '#224a94'], [763, 120, 4, 5, '#224a94'], [808, 120, 4, 5, '#224a94'],
    [452, 135, 75, 8, '#1c3494'], [475, 131, 45, 5, '#1c3494'], [495, 126, 23, 8, '#1c3494'],
    [91, 153, 82, 6, '#5a6c7a'], [91, 158, 20, 5, '#3a688c'], [541, 150, 40, 3, '#5a5aa0'], [580, 144, 4, 6, '#5c46a8'], [636, 150, 34, 3, '#5a5aa0'], [669, 144, 4, 6, '#5c46a8'], [722, 150, 38, 3, '#5a5aa0'], [758, 144, 4, 6, '#5c46a8'], [812, 153, 85, 6, '#5a6c7a'], [849, 144, 4, 6, '#5c46a8'], [541, 158, 22, 4, '#3a688c'], [722, 158, 22, 4, '#3a688c'], [898, 158, 20, 5, '#3a688c'], [990, 153, 84, 5, '#5a6c7a'],
    [0, 163, 89, 5, '#1c2458'], [91, 163, 87, 5, '#1c2458'], [181, 163, 157, 5, '#1c2458'], [340, 163, 19, 5, '#1c2458'], [541, 163, 18, 5, '#1c2458'], [563, 163, 16, 5, '#1c2458'], [584, 163, 22, 5, '#1c2458'], [634, 163, 24, 5, '#1c2458'], [662, 163, 16, 5, '#1c2458'], [682, 163, 14, 5, '#1c2458'], [699, 163, 20, 5, '#1c2458'], [722, 163, 16, 5, '#1c2458'], [743, 163, 16, 5, '#1c2458'], [764, 163, 22, 5, '#1c2458'], [812, 163, 85, 5, '#1c2458'], [898, 163, 180, 5, '#1c2458'],
    [0, 173, 88, 5, '#661a34'], [91, 173, 88, 5, '#661a34'], [181, 173, 178, 5, '#661a34'], [361, 173, 90, 5, '#661a34'], [452, 173, 81, 5, '#661a34'], [632, 177, 65, 6, '#661a34'], [697, 182, 22, 5, '#661a34'], [722, 177, 64, 6, '#661a34'], [811, 177, 65, 6, '#661a34'], [877, 182, 20, 5, '#661a34'], [898, 173, 89, 5, '#661a34'], [990, 173, 88, 5, '#661a34'],
    [91, 186, 88, 15, '#480c4c'], [181, 186, 178, 6, '#622460'], [361, 186, 90, 6, '#622460'], [898, 187, 88, 14, '#480c4c'], [990, 187, 88, 14, '#480c4c'],
    [181, 201, 88, 6, '#a23070'], [271, 201, 88, 6, '#bf86ac'], [628, 206, 6, 5, '#b02080'],
    [0, 215, 179, 5, '#4272a4'], [181, 215, 178, 5, '#95aed0'], [271, 239, 88, 5, '#6444a0'], [452, 229, 82, 6, '#6444a0'], [534, 225, 4, 5, '#6444a0'], [872, 225, 4, 5, '#6444a0'],
    [541, 235, 14, 5, '#6444b0'], [562, 235, 17, 5, '#6444b0'], [584, 235, 22, 5, '#6444b0'], [541, 244, 14, 5, '#6444b0'], [562, 244, 17, 5, '#6444b0'], [584, 244, 22, 5, '#6444b0'], [606, 250, 24, 5, '#6444b0'], [630, 235, 66, 5, '#6444b0'], [630, 243, 66, 9, '#6444b0'],
    [722, 235, 14, 5, '#6444b0'], [743, 235, 17, 5, '#6444b0'], [764, 235, 22, 5, '#6444b0'], [722, 244, 14, 5, '#6444b0'], [743, 244, 17, 5, '#6444b0'], [764, 244, 22, 5, '#6444b0'], [786, 250, 24, 5, '#6444b0'], [810, 235, 66, 5, '#6444b0'], [808, 243, 64, 9, '#6444b0'],
    [361, 253, 90, 6, '#a89a24'], [585, 262, 44, 6, '#a09432'], [722, 262, 66, 6, '#a09432'], [758, 257, 8, 6, '#a09432'], [810, 219, 22, 5, '#8a9444'], [898, 252, 88, 12, '#a09420'], [990, 253, 88, 9, '#d0c684'],
    [361, 277, 90, 5, '#6838a4'], [361, 282, 90, 6, '#842c84'], [380, 284, 70, 4, '#b060a0'], [452, 277, 82, 11, '#842c84'], [898, 277, 180, 5, '#6444a4'], [107, 272, 5, 5, '#c04a30'],
    [692, 287, 27, 5, '#2c98a4'], [877, 287, 20, 5, '#2c98a4'], [556, 288, 4, 4, '#1cb0b8'], [580, 292, 4, 4, '#1cb0b8'], [602, 288, 4, 4, '#1cb0b8'], [647, 288, 4, 4, '#1cb0b8'], [669, 292, 4, 4, '#1cb0b8'], [737, 288, 4, 4, '#1cb0b8'], [760, 292, 4, 4, '#1cb0b8'], [783, 288, 4, 4, '#1cb0b8'], [804, 288, 4, 4, '#1cb0b8'],
    [0, 301, 88, 5, '#6c6c90'], [91, 295, 40, 5, '#245c94'], [91, 300, 87, 5, '#9db2d0'], [181, 295, 178, 5, '#8aa4bc'], [271, 305, 20, 6, '#5c46a8'], [293, 305, 66, 6, '#98a8d0'], [452, 295, 40, 6, '#245c94'], [495, 295, 33, 6, '#8aa4bc'], [452, 305, 18, 6, '#5c46a8'], [473, 305, 54, 6, '#98a8d0'],
    [91, 319, 87, 5, '#6444a4'], [181, 315, 178, 5, '#a8504c'], [361, 314, 90, 7, '#c8a494'], [452, 315, 82, 6, '#a85a40'], [898, 315, 180, 5, '#a8503c'], [535, 311, 4, 5, '#c04a30'], [675, 311, 4, 5, '#c04a30'], [714, 311, 4, 5, '#c04a30'], [896, 311, 4, 5, '#c04a30']
];
// dense blocks under both drops
[[541, 65], [636, 60], [722, 64], [815, 82]].forEach(([x, w]) => {
    notes.push([x, 44, 14, 8, '#143c94'], [x, 63, 18, 9, '#104a80'], [x + 19, 65, w - 19, 8, '#8aa6b4'], [x, 77, 18, 17, '#164890'],
        [x + 20, 77, w - 20, 12, '#94b2cc'], [x - 5, 92, w + 5, 4, '#28a09c'], [x, 96, w, 20, '#2f6cb4'], [x + 23, 99, w - 23, 11, '#90b4e4']);
});
let song = '';
[0, 1078].forEach(offset => {
    notes.forEach(n => {
        song += `<rect x="${n[0] + offset}" y="${n[1]}" width="${n[2]}" height="${n[3]}" fill="${n[4]}"/>`;
    });
    for (let x = 134; x < 360; x += 23) {
        song += `<path d="M${x + offset} 62v26" stroke="#8b8b8b" stroke-width="2"/>`;
    }
    for (let x = 583; x < 900; x += 22) {
        song += `<path d="M${x + offset} 63v26M${x + offset} 98v11" stroke="#8b9bab" stroke-width="1.500"/>`;
    }
});
song += '<path d="M0 0v324M360 0v324M540 0v324M898 0v324" stroke="#333" stroke-width="1.500"/><path d="M769 0v324" stroke="#000" stroke-width="3"/>';
document.getElementById('overview').innerHTML = song;

/* ---------- timeline ---------- */
let ruler = '', grid = '';
for (let i = 0; i < 24; i++) {
    const x = 34.3 + i * BAR4;
    ruler += i % 2 ? `<div class="half" style="left:${x}px"></div>` : `<div class="bar" style="left:${x}px"><span>${33 + i * 4}</span></div>`;
    grid += `<div${i > 3 ? ' class="under"' : ''} style="left:${x}px"></div>`;
}
document.getElementById('ruler').innerHTML = ruler;
document.getElementById('gridlines').innerHTML = grid;

let times = '';
for (let i = -3; i < 26; i++) {
    const x = 113.3 + i * 33.06;
    times += i % 6 ? `<div class="half" style="left:${x}px"></div>` : `<div class="minute" style="left:${x}px"><span>${2 + i / 6}:00</span></div>`;
}
document.getElementById('times').innerHTML = times;

document.getElementById('locators').innerHTML = [[34, 'Start'], [193, 'Break'], [272, 'Drop2'], [432, 'Out']].map(([x, name]) =>
    `<div class="locator" style="left:${x}px"><svg width="15" height="16"><path d="M0 1l13 7-13 7" fill="none" stroke="#333"/></svg><span>${name}</span></div>`).join('');

// [x, width] is a plain tick, otherwise [x, width, colour, label, divisions]
const stabs = [[272.3, 16.5, 'purple stripe'], [292.5, 9, 'purple'], [311.7, 29.5, 'purple', '15 S'], [351.3, 16.5, 'purple stripe'], [371.5, 9.3, 'purple'], [391, 29.5, 'purple', '15 S'],
    [749, 16.7, 'purple stripe'], [768, 10.7, 'purple', '1'], [788.7, 29.3, 'purple', '15 S'], [828, 17, 'purple stripe'], [847, 10.7, 'purple', '1'], [867.7, 29.7, 'purple', '15 S']];
const lanes = {
    48: [[269.5, 2.5], [300, 1.5], [418.5, 1.5], [745.5, 3], [775.5, 3], [894.5, 3]],
    49: [[232.3, 37.5, 'purple', 'Pluc'], [268, 2], [709.3, 36, 'purple', 'Pluc'], [743.5, 2]],
    50: stabs,
    51: [[153, 39.5, 'purple', '15 St'], [630, 39.3, 'purple', '15 St']],
    52: stabs,
    53: [[302, 10.5, 'purple'], [311, 30, 'purple', '15 S'], [381, 11, 'purple'], [390.5, 28.5, 'purple', '15 S'], [779, 10.5, 'purple'], [788, 30, 'purple', '15 S'], [858, 10.5, 'purple'], [867.3, 27, 'purple', '15']],
    54: [[193, 39, 'yellow', 'Arp'], [432.3, 78.7, 'yellow', 'Arp', [39]], [669.7, 39.3, 'yellow', 'Arp'], [907.3, 76, 'yellow', 'Arp', [39]]],
    55: [[368.3, 3], [432.3, 78.7, 'yellow', 'Arp', [39]], [843.5, 3], [907.3, 76, 'yellow', 'Arp', [39]]],
    56: [[292.3, 18.7, 'yellow', 'Ar'], [351.3, 29.3, 'yellow', 'Arp'], [768, 20, 'yellow', 'Ar'], [828, 29.7, 'yellow', 'Arp']],
    57: [],
    58: [[81.3, 3], [300, 1.3], [339.6, 1.3], [556.8, 3], [777, 1.3], [816.6, 1.3]],
    59: [[193, 39.8, 'purple', 'Voca'], [232.3, 37.5, 'purple', 'Voca'], [432.3, 78.7, 'purple', 'Vocals', [39]], [669.7, 39.8, 'purple', 'Voca'], [709.3, 35.7, 'purple', 'Voca'], [907.3, 76, 'purple', 'Vocals', [39]]],
    60: [[193, 39.8, 'magenta dotted', 'Voca', [9, 19, 29]], [232.3, 37.5, 'magenta dotted', 'Voca', [9, 19, 29]], [669.7, 39.8, 'magenta dotted', 'Voca', [9, 19, 29]], [709.3, 35.7, 'magenta dotted', 'Voca', [9, 19, 29]]],
    61: [[279.5, 1.3], [300, 1.3], [309.5, 2], [319, 1.5], [339.5, 2], [340.5, 10.5, 'cyan'], [358.5, 3], [379.3, 1.5], [388.9, 2], [420.3, 9.7, 'cyan'], [755, 3], [775.5, 1.3], [785, 3], [794.5, 3], [815, 1.5], [818, 9.7, 'cyan'], [834, 3], [854.5, 1.3], [864, 3], [897.3, 9.7, 'cyan']],
    62: [[289, 3], [328.5, 3], [368, 3], [766, 1.5], [805.6, 1.5], [845.3, 1.5]],
    63: [[74, 158.8, 'blue', 'Vocals Oh Vox', [20, 39, 59, 79, 99, 118, 138]], [232.3, 34.3, 'blue', 'Voca', [20]], [551, 158.8, 'blue', 'Vocals Oh Vox', [20, 39, 59, 79, 99, 118, 138]], [709.3, 34.3, 'blue', 'Voca', [20]]],
    64: [[34.3, 78.7, 'lavender', 'Intro Vox', [39]], [511, 79, 'lavender', 'Intro Vox', [39]]],
    65: [[153, 79.8, 'peri dotted', 'Vocals Ay', [9, 19, 29, 39, 49, 59, 69]], [232.3, 34.3, 'peri dotted', 'Voca', [9, 19]], [630, 79.8, 'peri dotted', 'Vocals Ay', [9, 19, 29, 39, 49, 59, 69]], [709.3, 34.3, 'peri dotted', 'Voca', [9, 19]]],
    66: [[269.7, 2], [332, 3], [349.3, 1.7], [428.5, 4], [745.5, 3], [807, 3], [824.5, 3], [904, 3]],
    67: [[113.3, 119.5, 'orange', 'Kidz'], [232.3, 34, 'orange', 'Kidz'], [432.3, 78.7, 'orange', 'Kidz'], [590.7, 119.3, 'orange', 'Kidz', [79]], [709.3, 34.3, 'orange', 'Kidz'], [907.3, 76, 'orange', 'Kidz']],
    68: [[74, 118.3, 'purple', 'Tremolo Violin', [39, 79]], [551, 118.3, 'purple', 'Tremolo Violin', [39, 79]]]
};

function clipHtml([x, w, color, label, divs]) {
    if (!color) return `<div class="tick" style="left:${x}px;width:${w}px"></div>`;
    const marks = (divs || []).map(d => `<i style="left:${d}px"></i>`).join('');
    return `<div class="clip ${color}" style="left:${x}px;width:${w}px">${marks}${label ? `<span>${label}</span>` : ''}</div>`;
}

function automation() {
    const bars = [[193, 8, 77, 3], [432, 8, 79, 3], [670, 8, 75, 3], [907, 8, 73, 3], [193, 13, 77, 5], [670, 13, 75, 5], [74, 29, 193, 3], [551, 29, 192, 3],
        [34, 34, 80, 3], [511, 34, 79, 3], [153, 38, 114, 5], [630, 38, 113, 5], [114, 49, 153, 3], [432, 49, 79, 3], [590, 49, 153, 3], [907, 49, 73, 3], [83, 4, 2, 3], [558, 4, 2, 3]];
    [0, 476.5].forEach(o => {
        [301, 340].forEach(x => bars.push([x + o, 4, 1.5, 3]));
        [280, 301, 319, 360, 380, 389].forEach(x => bars.push([x + o, 19, 2, 3]));
        bars.push([340 + o, 19, 11, 3], [420 + o, 19, 9, 3]);
        [290, 330, 369].forEach(x => bars.push([x + o, 24, 2, 3]));
        [270, 333, 350, 429].forEach(x => bars.push([x + o, 44, 2, 3]));
    });
    return `<svg width="980" height="243">
        <g fill="#2a5050" fill-opacity=".38">${bars.map(b => `<rect x="${b[0]}" y="${b[1]}" width="${b[2]}" height="${b[3]}"/>`).join('')}</g>
        <g fill="none" stroke="#ea2412"><path d="M0 131.500H233L271 150.500V131.500H980" stroke-width="3"/>
        <g stroke-width="2.200"><circle cx="233.500" cy="131.500" r="3.300"/><circle cx="271.500" cy="131.500" r="3.300"/><circle cx="271.500" cy="150.500" r="3.300"/></g></g></svg>`;
}

document.getElementById('lanes').innerHTML = Object.keys(lanes).map(id => {
    const kind = id === '57' ? ' tall' : id === '49' ? ' selected' : '';
    return `<div class="lane${kind}">${id === '57' ? automation() : lanes[id].map(clipHtml).join('')}</div>`;
}).join('');
document.getElementById('returnLanes').innerHTML = '<div class="lane"></div>'.repeat(3);

/* ---------- track headers ---------- */
const tracks = [
    [48, 'Serum', 'grey', 'purple', '-51.00'], [49, 'Staccato H', 'purple', 'purple'], [50, 'Staccato H', 'purple', 'purple', '-5.00'], [51, 'Staccato H', 'purple', 'purple'],
    [52, 'Serum Chords', 'grey'], [53, 'Serum pluck', 'grey'], [54, 'Arp High', 'grey'], [55, 'Arp High', 'grey'], [56, 'Serum', 'grey'], [57, 'Vocals', 'pink'],
    [58, 'Vocals Oh', 'mint', 'pink'], [59, 'Vocal Long A', 'purple', 'pink'], [60, 'GirlOhVox', 'magenta', 'pink'], [61, 'GirlOhVox', 'cyan', 'pink'], [62, 'GirlOhVox', 'cyan', 'pink'],
    [63, 'GirlOhVox', 'blue', 'pink'], [64, 'GirlOhVox', 'blue', 'pink'], [65, 'Ey', 'lavender', 'pink', '-15.00'], [66, 'heyhey', 'ice', 'pink'], [67, 'Children', 'orange', 'pink'], [68, 'Copy Violin Tre', 'magenta']
];

function foldIcon(open) {
    const arrow = open ? 'M5 7h12l-6 9z' : 'M7.500 5l9.500 6-9.500 6z';
    return `<svg width="22" height="22"><circle cx="11" cy="11" r="9.500" fill="#9a9a9a" stroke="#333" stroke-width="1.600"/><path d="${arrow}"/></svg>`;
}
function delayHtml(value) {
    return `<div class="delay"><div class="box value${value ? ' set' : ''}"><span>${value || '0.00'}</span></div><div class="box ms"><span>ms</span></div></div>`;
}
function armHtml(id) {
    const audio = id === 58 || id === 67;
    const half = audio ? '' : '<path d="M7.500 2.500V8q-.5 2-4 1.500" fill="none" stroke="#aaa" stroke-width="1.600"/>';
    return `<div class="box arm"><svg width="14" height="14"><circle cx="7" cy="7" r="5.800"/>${half}</svg></div>`;
}

document.getElementById('tracks').innerHTML = tracks.map(([id, name, color, group, delay]) => {
    if (id === 57) {
        return `<div class="track tall">
            <div class="name-col"><div class="name pink">${foldIcon(true)}<span>57 Vocals</span></div>
                <div class="chooser"><div class="box select"><i></i><span>Mixer</span></div><div class="box select"><i></i><span>Track Volume</span></div>
                <svg class="add" width="18" height="18"><circle cx="9" cy="9" r="8" fill="none" stroke="#222" stroke-width="1.500"/><path d="M5 9h8M9 5v8" stroke="#111" stroke-width="1.800"/></svg><i class="fold"></i></div></div>
            <div class="io"><div class="box select"><span>Master</span></div><div class="box"></div></div>
            <div class="controls"><div class="line"><div class="box num"><span>57</span></div><div class="box solo"><span>S</span></div></div>
                <div class="line"><div class="box volume"><i></i><span>-10.3</span></div><div class="box pan"><span>C</span></div></div>
                <div class="line"><div class="box inf"><span>-inf</span></div><div class="box inf"><span>-inf</span></div></div><div class="meters"></div></div>
            ${delayHtml()}</div>`;
    }
    const last = id === 51 || id === 67 ? ' last' : '';
    return `<div class="track${group ? ' child' : ''}${id === 49 ? ' selected' : ''}">
        <div class="name-col">${group ? `<div class="group-strip ${group}${last}"></div>` : ''}<div class="name ${color}">${foldIcon()}<span>${id} ${name}</span></div></div>
        <div class="io"><div class="box"></div></div>
        <div class="controls"><div class="line"><div class="box num"><span>${id}</span></div><div class="box solo"><span>S</span></div>${armHtml(id)}</div><div class="meters"></div></div>
        ${delayHtml(delay)}</div>`;
}).join('');

const returns = [['A', 'A Reverb | Reverb'], ['B', 'B Delay']].map(([id, name]) => `<div class="track">
    <div class="name-col"><div class="name plain">${foldIcon()}<span>${name}</span></div></div>
    <div class="io"><div class="box"></div></div>
    <div class="controls"><div class="line"><div class="box num"><span>${id}</span></div><div class="box solo small"><span>S</span></div><div class="box post"><span>Post</span></div></div><div class="meters"></div></div>
    ${delayHtml()}</div>`).join('');
document.getElementById('returns').innerHTML = returns + `<div class="track">
    <div class="name-col"><div class="name olive">${foldIcon()}<span> Master</span></div></div>
    <div class="io"><div class="box select"><svg width="9" height="14"><path d="M2 0v2.500M7 0v2.500M2 4v10M7 4v10" stroke="#111" stroke-width="2.500"/></svg><span>1/2</span></div></div>
    <div class="controls"><div class="line"><div class="box master-vol"><span>0</span></div><div class="box master-cue"><span>0</span></div></div><div class="meters"></div></div>
    ${delayHtml()}</div>`;

/* ---------- device chain thumbnails: x, width, screen x, screen width ---------- */
document.getElementById('chain').innerHTML = [[0, 24, 1, 13], [26, 30, 6, 15], [58, 47, 5, 37], [107, 48, 6, 36], [157, 25, 0, 0], [183, 45, 2, 36], [231, 30, 6, 14], [262, 10, 0, 0], [273, 10, 0, 0]].map(([x, w, sx, sw], i) => {
    let s = `<rect x="${x}" width="${w}" height="26" fill="#989895"/><rect x="${x}" width="${w}" height="3" fill="${i === 6 ? '#80eeee' : '#b4b4b4'}"/>`;
    if (sw) s += `<rect x="${x + sx}" y="${i === 0 ? 6 : 3.5}" width="${sw}" height="${sw > 30 ? 17 : i === 0 ? 16 : 12}" fill="#14181a"/>`;
    if (sw > 30) {
        const curve = i === 2 ? 'l6 2 5 2 6-4h15' : i === 3 ? 'h8l5 2 8-5 8 3' : 'h28';
        s += `<path d="M${x + sx + 4} 12${curve}" fill="none" stroke="#8a741c" stroke-width="1.200" stroke-dasharray="5 1"/><path d="M${x + 4} 23.500h${w - 8}" stroke="#b08068" stroke-width="2" stroke-dasharray="2 3"/><path d="M${x + w - 3} 14v9" stroke="#e0a020" stroke-width="3" stroke-dasharray="3 2"/>`;
    }
    if (sw === 15 || sw === 14) s += `<path d="M${x + 6} 18h16" stroke="#b87040" stroke-width="2" stroke-dasharray="2 6"/><path d="M${x + 4} 22h20" stroke="#7c7c7c" stroke-width="2" stroke-dasharray="3 2"/>`;
    if (!sw) s += `<path d="M${x + 3} 8h${w - 6}M${x + 3} 18h${w - 6}" stroke="${w > 20 ? '#c0c0c0' : '#777'}" stroke-width="3"/>`;
    return s;
}).join('');
```
